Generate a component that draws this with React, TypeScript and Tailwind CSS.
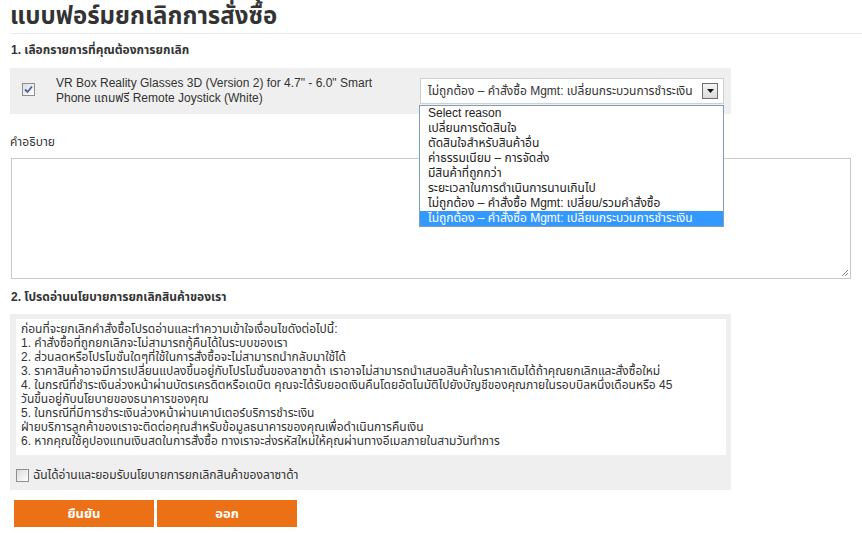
const reasons = [
  "Select reason",
  "เปลี่ยนการตัดสินใจ",
  "ตัดสินใจสำหรับสินค้าอื่น",
  "ค่าธรรมเนียม – การจัดส่ง",
  "มีสินค้าที่ถูกกว่า",
  "ระยะเวลาในการดำเนินการนานเกินไป",
  "ไม่ถูกต้อง – คำสั่งซื้อ Mgmt: เปลี่ยน/รวมคำสั่งซื้อ",
  "ไม่ถูกต้อง – คำสั่งซื้อ Mgmt: เปลี่ยนกระบวนการชำระเงิน",
];

const policyLines = [
  "ก่อนที่จะยกเลิกคำสั่งซื้อโปรดอ่านและทำความเข้าใจเงื่อนไขดังต่อไปนี้:",
  "1. คำสั่งซื้อที่ถูกยกเลิกจะไม่สามารถกู้คืนได้ในระบบของเรา",
  "2. ส่วนลดหรือโปรโมชั่นใดๆที่ใช้ในการสั่งซื้อจะไม่สามารถนำกลับมาใช้ได้",
  "3. ราคาสินค้าอาจมีการเปลี่ยนแปลงขึ้นอยู่กับโปรโมชั่นของลาซาด้า เราอาจไม่สามารถนำเสนอสินค้าในราคาเดิมได้ถ้าคุณยกเลิกและสั่งซื้อใหม่",
  "4. ในกรณีที่ชำระเงินล่วงหน้าผ่านบัตรเครดิตหรือเดบิต คุณจะได้รับยอดเงินคืนโดยอัตโนมัติไปยังบัญชีของคุณภายในรอบบิลหนึ่งเดือนหรือ 45",
  "วันขึ้นอยู่กับนโยบายของธนาคารของคุณ",
  "5. ในกรณีที่มีการชำระเงินล่วงหน้าผ่านเคาน์เตอร์บริการชำระเงิน",
  "ฝ่ายบริการลูกค้าของเราจะติดต่อคุณสำหรับข้อมูลธนาคารของคุณเพื่อดำเนินการคืนเงิน",
  "6. หากคุณใช้คูปองแทนเงินสดในการสั่งซื้อ ทางเราจะส่งรหัสใหม่ให้คุณผ่านทางอีเมลภายในสามวันทำการ",
];

function Checkbox(props: { checked?: boolean }) {
  return (
    <div className="flex h-[13px] w-[13px] shrink-0 items-center justify-center border border-[#8e8f8f] bg-[linear-gradient(135deg,#dcdcdc_0%,#ffffff_100%)]">
      {props.checked ? (
        <svg width="9" height="9" viewBox="0 0 9 9">
          <path d="M1 4.5 L3.5 7 L8 1.5" fill="none" stroke="#4a5ea8" strokeWidth="1.8" />
        </svg>
      ) : null}
    </div>
  );
}

export default function App() {
  return (
    <div
      className="relative h-[533px] w-[862px] overflow-hidden bg-white text-[#333]"
      style={{ fontFamily: '"Liberation Sans", Arial, "Noto Sans Thai", Tahoma, sans-serif' }}
    >
      <h1 className="ml-[10px] pt-[2px] text-[24px] font-bold leading-[27px] text-[#333]">
        แบบฟอร์มยกเลิกการสั่งซื้อ
      </h1>
      <div className="ml-[10px] mt-[4px] border-t border-[#e9e9e9]" />

      <h2 className="ml-[11px] mt-[8px] text-[12px] font-bold leading-[16px]">
        1. เลือกรายการที่คุณต้องการยกเลิก
      </h2>

      <div className="ml-[10px] mt-[10px] flex h-[46px] w-[721px] bg-[#efefef]">
        <div className="ml-[12px] mt-[15px]">
          <Checkbox checked />
        </div>
        <div className="ml-[21px] mt-[8px] w-[330px] text-[12px] leading-[15px]">
          VR Box Reality Glasses 3D (Version 2) for 4.7" - 6.0" Smart Phone แถมฟรี Remote Joystick (White)
        </div>
        <div className="ml-[34px] mt-[10px] flex h-[26px] w-[304px] items-center justify-between border border-[#cfcfcf] bg-white pl-[7px] pr-[5px] text-[12px]">
          <span className="whitespace-nowrap">ไม่ถูกต้อง – คำสั่งซื้อ Mgmt: เปลี่ยนกระบวนการชำระเงิน</span>
          <div className="flex h-[16px] w-[16px] shrink-0 items-center justify-center border border-[#6f6f6f] bg-[linear-gradient(180deg,#f4f4f4_0%,#dadada_100%)]">
            <svg width="7" height="4" viewBox="0 0 7 4">
              <path d="M0 0 H7 L3.5 4 Z" fill="#111" />
            </svg>
          </div>
        </div>
      </div>

      <div className="absolute left-[419px] top-[105px] z-10 w-[305px] border border-[#7f9db9] bg-white text-[12px]">
        {reasons.map((reason, i) => (
          <div
            className={
              i === reasons.length - 1
                ? "h-[15px] whitespace-nowrap bg-[#3399ff] pl-[8px] leading-[15px] text-white"
                : "h-[15px] whitespace-nowrap pl-[8px] leading-[15px] text-[#222]"
            }
            key={reason}
          >
            {reason}
          </div>
        ))}
      </div>

      <p className="ml-[10px] mt-[20px] text-[12px] leading-[16px]">คำอธิบาย</p>
      <div className="relative ml-[11px] mt-[8px] h-[121px] w-[840px] border border-[#c9c9c9] bg-white">
        <svg className="absolute bottom-[1px] right-[1px]" width="9" height="9" viewBox="0 0 9 9">
          <path d="M8 2 L2 8 M8 5 L5 8" stroke="#888" strokeWidth="1" />
        </svg>
      </div>

      <h2 className="ml-[11px] mt-[10px] text-[12px] font-bold leading-[16px]">
        2. โปรดอ่านนโยบายการยกเลิกสินค้าของเรา
      </h2>

      <div className="ml-[10px] mt-[9px] h-[176px] w-[721px] bg-[#efefef] pl-[6px] pr-[5px] pt-[5px]">
        <div className="h-[136px] bg-white pl-[5px] pt-[3px] text-[12px] leading-[14px]">
          {policyLines.map((line) => (
            <div className="whitespace-nowrap" key={line}>
              {line}
            </div>
          ))}
        </div>
        <div className="mt-[13px] flex items-center gap-[4px] text-[12px] leading-[14px]">
          <Checkbox />
          <span>ฉันได้อ่านและยอมรับนโยบายการยกเลิกสินค้าของลาซาด้า</span>
        </div>
      </div>

      <div className="ml-[14px] mt-[10px] flex gap-[3px]">
        <button className="h-[27px] w-[140px] bg-[#ec7116] text-[13px] font-bold text-white">ยืนยัน</button>
        <button className="h-[27px] w-[140px] bg-[#ec7116] text-[13px] font-bold text-white">ออก</button>
      </div>
    </div>
  );
}
